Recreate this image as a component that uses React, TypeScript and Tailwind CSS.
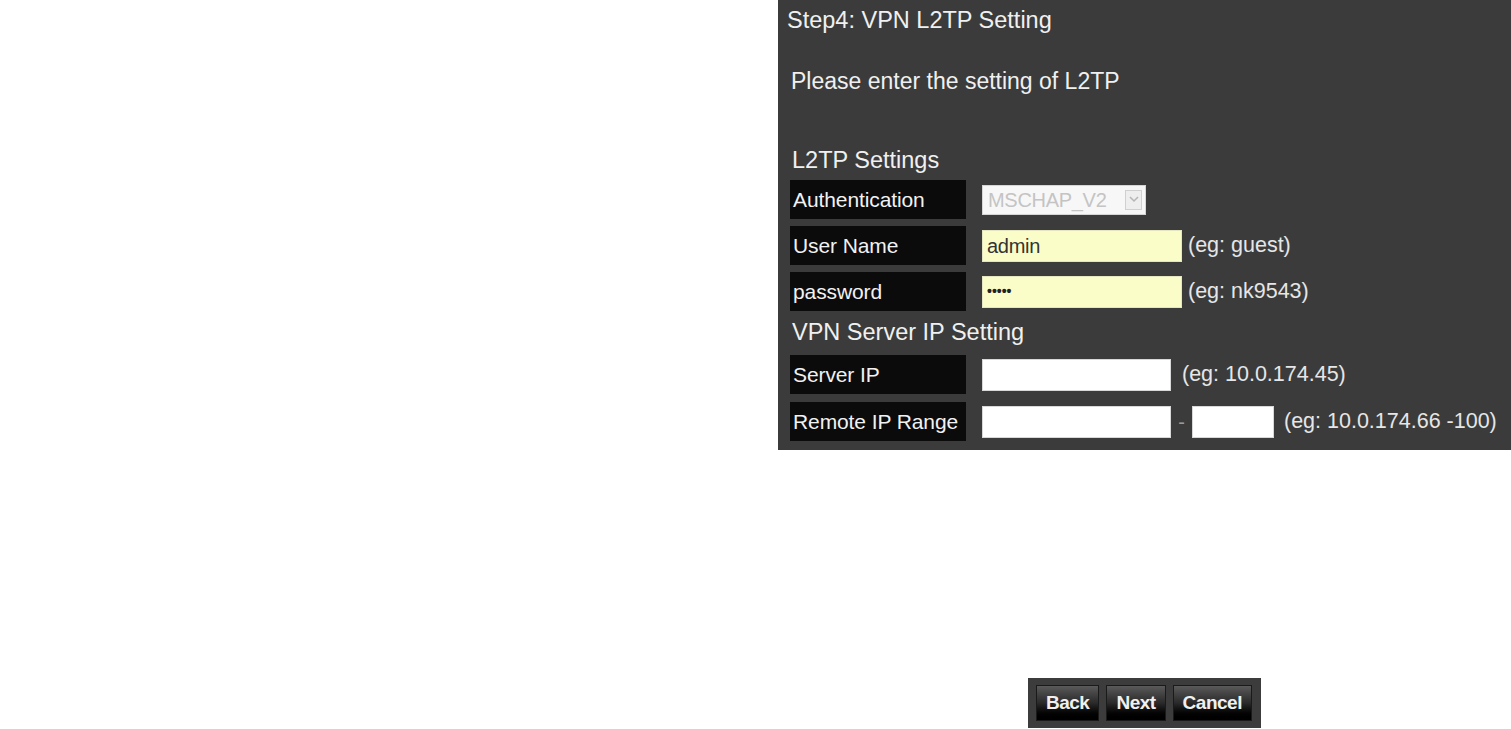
import React from "react";

const font = { fontFamily: '"Liberation Sans", Arial, sans-serif' };

function Label({ children }: { children: React.ReactNode }) {
  return (
    <div className="w-[176px] h-[39px] bg-[#0b0b0b] flex items-center pl-[3px] text-[21px] text-[#f2f2f2] tracking-[-0.1px]">
      {children}
    </div>
  );
}

export default function App() {
  return (
    <div className="w-[1511px] h-[729px] bg-white relative overflow-hidden" style={font}>
      <div className="ml-[778px] w-[733px] h-[450px] bg-[#3b3b3b] flex flex-col">
        <div className="h-[41px] flex items-center pl-[9px] text-[23.5px] text-[#f0f0f0]">
          Step4: VPN L2TP Setting
        </div>
        <div className="h-[41px] mt-[20px] flex items-center pl-[13px] text-[23px] text-[#f0f0f0]">
          Please enter the setting of L2TP
        </div>
        <div className="h-[36px] mt-[40px] flex items-end pl-[14px] text-[23.5px] text-[#f0f0f0]">
          L2TP Settings
        </div>
        <div className="pl-[12px] flex flex-col gap-[7px] mt-[2px]">
          <div className="flex items-center">
            <Label>Authentication</Label>
            <div className="ml-[16px] w-[164px] h-[30px] bg-[#f7f7f7] border border-[#d6d6d6] flex items-center justify-between pl-[5px] pr-[3px]">
              <span className="text-[20px] text-[#c4c4c4] tracking-[-0.3px]">MSCHAP_V2</span>
              <span className="w-[17px] h-[20px] border border-[#d0d0d0] bg-[#eeeeee] flex items-center justify-center">
                <svg width="10" height="7" viewBox="0 0 10 7">
                  <path d="M1 1 L5 5 L9 1" fill="none" stroke="#b5b5b5" strokeWidth="1.5" />
                </svg>
              </span>
            </div>
          </div>
          <div className="flex items-center">
            <Label>User Name</Label>
            <div className="ml-[16px] w-[200px] h-[32px] bg-[#fbfdc8] border border-[#e5e5c0] flex items-center pl-[4px] text-[20px] text-[#333] tracking-[-0.3px]">
              admin
            </div>
            <span className="ml-[6px] text-[21.5px] text-[#e6e6e6]">(eg: guest)</span>
          </div>
          <div className="flex items-center">
            <Label>password</Label>
            <div className="ml-[16px] w-[200px] h-[32px] bg-[#fbfdc8] border border-[#e5e5c0] flex items-center pl-[4px] text-[14px] font-bold text-[#222]">
              •••••
            </div>
            <span className="ml-[6px] text-[21.5px] text-[#e6e6e6]">(eg: nk9543)</span>
          </div>
        </div>
        <div className="h-[40px] mt-[2px] flex items-center pl-[14px] text-[23.5px] text-[#f0f0f0]">
          VPN Server IP Setting
        </div>
        <div className="pl-[12px] flex flex-col gap-[8px] mt-[2px]">
          <div className="flex items-center">
            <Label>Server IP</Label>
            <div className="ml-[16px] w-[189px] h-[32px] bg-white border border-[#d8d8d8]" />
            <span className="ml-[11px] text-[21.5px] text-[#e6e6e6]">(eg: 10.0.174.45)</span>
          </div>
          <div className="flex items-center">
            <Label>Remote IP Range</Label>
            <div className="ml-[16px] w-[189px] h-[32px] bg-white border border-[#d8d8d8]" />
            <span className="w-[21px] text-center text-[20px] text-[#9a9a9a]">-</span>
            <div className="w-[82px] h-[32px] bg-white border border-[#d8d8d8]" />
            <span className="ml-[10px] text-[21.5px] text-[#e6e6e6]">(eg: 10.0.174.66 -100)</span>
          </div>
        </div>
      </div>
      <div className="mt-[228px] ml-[1028px] w-[233px] h-[50px] bg-[#3c3c3c] flex items-center pl-[8px] gap-[7px]">
        {["Back", "Next", "Cancel"].map((b) => (
          <button
            key={b}
            className="h-[36px] px-[9px] bg-gradient-to-b from-[#5a5a5a] via-[#2a2a2a] to-[#000000] border border-[#1a1a1a] text-[19px] font-bold text-[#f0f0f0] tracking-[-0.5px]"
            style={font}
          >
            {b}
          </button>
        ))}
      </div>
    </div>
  );
}
